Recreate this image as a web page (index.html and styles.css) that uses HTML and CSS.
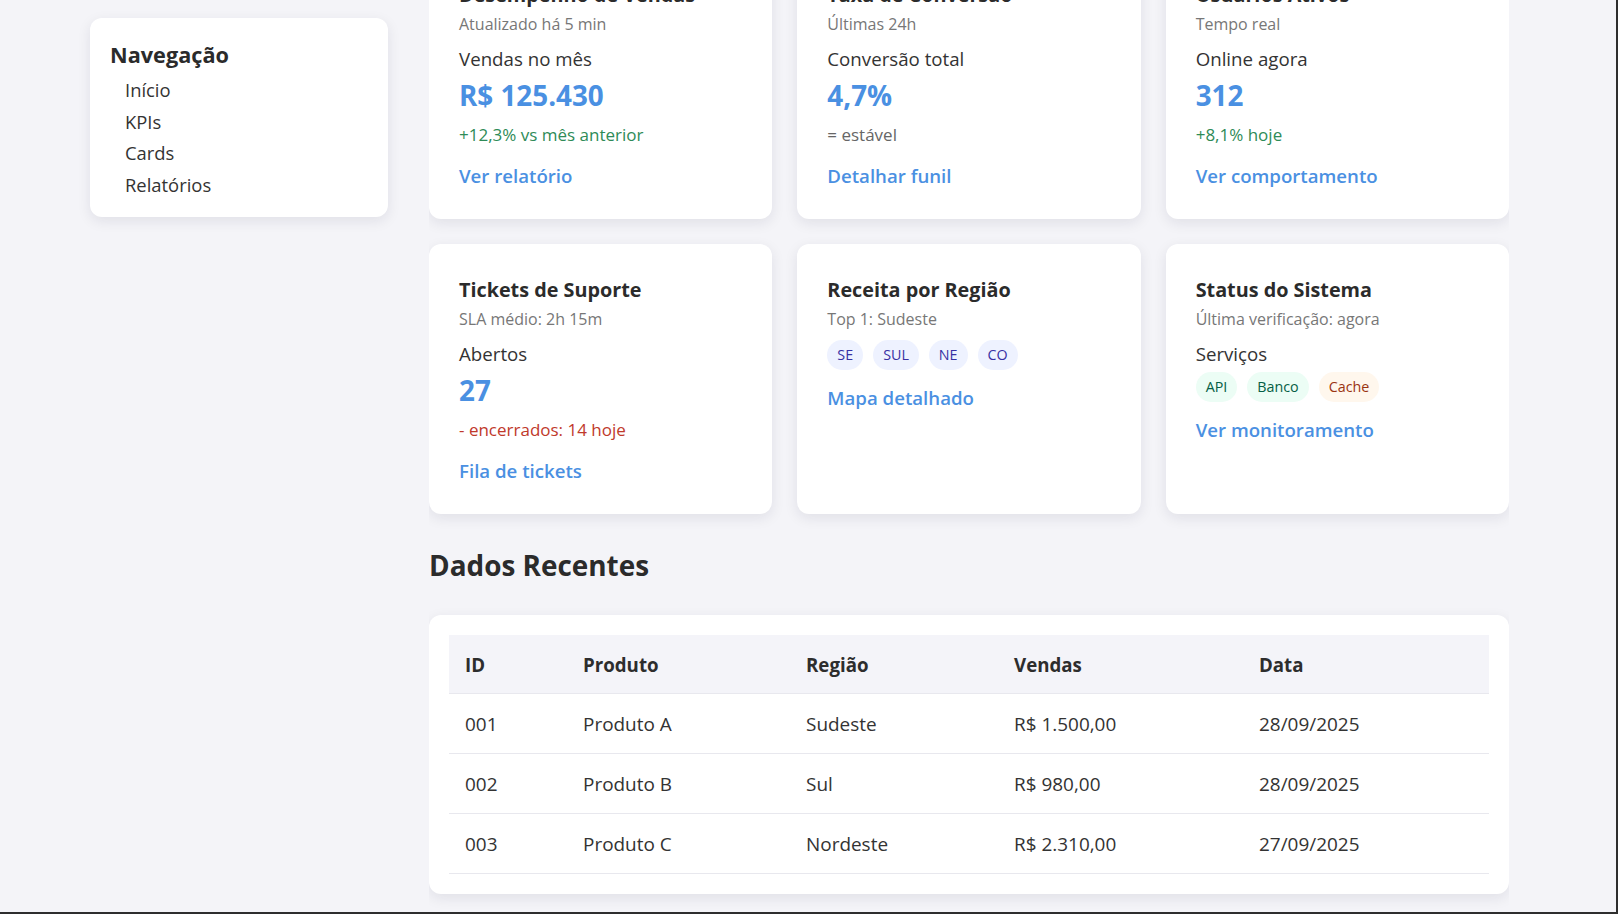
FILE: index.html
```html
<!DOCTYPE html>
<html lang="pt-BR">
<head>
<meta charset="utf-8">
<title>Dashboard</title>
<link rel="stylesheet" href="styles.css">
</head>
<body>
<div class="page">
  <aside class="sidebar">
    <nav class="nav-card">
      <h2 class="nav-title">Navegação</h2>
      <ul class="nav-list">
        <li>Início</li>
        <li>KPIs</li>
        <li>Cards</li>
        <li>Relatórios</li>
      </ul>
    </nav>
  </aside>

  <main class="main">
    <header class="page-header">
      <h1 class="page-title">Painel de Indicadores</h1>
    </header>

    <section class="kpis">
      <h2 class="section-title">Cards</h2>
      <div class="card-grid">
        <article class="card">
          <h3 class="card-title">Desempenho de Vendas</h3>
          <p class="card-sub">Atualizado há 5 min</p>
          <p class="card-label">Vendas no mês</p>
          <p class="card-value">R$ 125.430</p>
          <p class="card-delta up">+12,3% vs mês anterior</p>
          <a class="card-link" href="#">Ver relatório</a>
        </article>
        <article class="card">
          <h3 class="card-title">Taxa de Conversão</h3>
          <p class="card-sub">Últimas 24h</p>
          <p class="card-label">Conversão total</p>
          <p class="card-value">4,7%</p>
          <p class="card-delta flat">= estável</p>
          <a class="card-link" href="#">Detalhar funil</a>
        </article>
        <article class="card">
          <h3 class="card-title">Usuários Ativos</h3>
          <p class="card-sub">Tempo real</p>
          <p class="card-label">Online agora</p>
          <p class="card-value">312</p>
          <p class="card-delta up">+8,1% hoje</p>
          <a class="card-link" href="#">Ver comportamento</a>
        </article>
        <article class="card">
          <h3 class="card-title">Tickets de Suporte</h3>
          <p class="card-sub">SLA médio: 2h 15m</p>
          <p class="card-label">Abertos</p>
          <p class="card-value">27</p>
          <p class="card-delta down">- encerrados: 14 hoje</p>
          <a class="card-link" href="#">Fila de tickets</a>
        </article>
        <article class="card">
          <h3 class="card-title">Receita por Região</h3>
          <p class="card-sub">Top 1: Sudeste</p>
          <div class="chips">
            <span class="chip region">SE</span>
            <span class="chip region">SUL</span>
            <span class="chip region">NE</span>
            <span class="chip region">CO</span>
          </div>
          <a class="card-link" href="#">Mapa detalhado</a>
        </article>
        <article class="card">
          <h3 class="card-title">Status do Sistema</h3>
          <p class="card-sub">Última verificação: agora</p>
          <p class="card-label">Serviços</p>
          <div class="chips">
            <span class="chip ok">API</span>
            <span class="chip ok">Banco</span>
            <span class="chip warn">Cache</span>
          </div>
          <a class="card-link" href="#">Ver monitoramento</a>
        </article>
      </div>
    </section>

    <section class="recent">
      <h2 class="section-title recent-title">Dados Recentes</h2>
      <div class="table-card">
        <table class="data-table">
          <colgroup>
            <col class="c-id"><col class="c-prod"><col class="c-reg"><col class="c-sales"><col class="c-date">
          </colgroup>
          <thead>
            <tr><th>ID</th><th>Produto</th><th>Região</th><th>Vendas</th><th>Data</th></tr>
          </thead>
          <tbody>
            <tr><td>001</td><td>Produto A</td><td>Sudeste</td><td>R$ 1.500,00</td><td>28/09/2025</td></tr>
            <tr><td>002</td><td>Produto B</td><td>Sul</td><td>R$ 980,00</td><td>28/09/2025</td></tr>
            <tr><td>003</td><td>Produto C</td><td>Nordeste</td><td>R$ 2.310,00</td><td>27/09/2025</td></tr>
          </tbody>
        </table>
      </div>
    </section>
  </main>
</div>
<div class="frame"></div>
</body>
</html>
```
FILE: styles.css
```css
* { box-sizing: border-box; }

html, body {
  margin: 0;
  height: 100%;
}

body {
  background: #f4f4f8;
  color: #333;
  font-family: "Open Sans", "Noto Sans", sans-serif;
  overflow: hidden;
}

.page {
  display: grid;
  grid-template-columns: 298px 1080px;
  column-gap: 41px;
  padding-left: 90px;
  height: 100vh;
}

/* Sidebar */
.sidebar {
  align-self: start;
  padding-top: 18px;
}

.nav-card {
  background: #fff;
  border-radius: 12px;
  padding: 20px 20px 16px 20px;
  box-shadow: 0 4px 14px rgba(20, 20, 50, 0.09);
}

.nav-title {
  margin: 0;
  font-size: 21.7px;
  line-height: 33px;
  font-weight: 700;
  color: #2b2b2b;
}

.nav-list {
  list-style: none;
  margin: 3px 0 0;
  padding: 0 0 0 15px;
}

.nav-list li {
  font-size: 18.4px;
  line-height: 31.7px;
  color: #333;
}

/* Main column: scrolled to its end */
.main {
  height: 100vh;
  overflow: hidden;
  display: flex;
  flex-direction: column;
  justify-content: flex-end;
  padding-bottom: 20px;
}

.main > * { flex-shrink: 0; }

.page-title {
  margin: 0 0 20px;
  font-size: 32px;
  color: #2b2b2b;
}

.section-title {
  margin: 0 0 24px;
  font-size: 27.9px;
  line-height: 34px;
  font-weight: 700;
  color: #2b2b2b;
}

.recent-title {
  margin: 34px 0 33px;
}

/* Cards */
.card-grid {
  display: grid;
  grid-template-columns: repeat(3, 1fr);
  gap: 25px;
}

.card {
  background: #fff;
  border-radius: 12px;
  padding: 30px 30px 29px;
  box-shadow: 0 4px 14px rgba(20, 20, 50, 0.09);
}

.card p { margin: 0; }

.card-title {
  margin: 0;
  font-size: 19.8px;
  line-height: 31px;
  font-weight: 700;
  color: #2b2b2b;
}

.card .card-sub {
  margin: 2px 0 8.5px;
  font-size: 16px;
  line-height: 24px;
  color: #777;
}

.card .card-label {
  margin: 0 0 4.5px;
  font-size: 18.7px;
  line-height: 28px;
  color: #333;
}

.card .card-value {
  font-size: 27.8px;
  line-height: 36px;
  font-weight: 700;
  color: #4a90e2;
}

.card .card-delta {
  margin-top: 9px;
  font-size: 17px;
  line-height: 26px;
}

.up { color: #2e8b57; }
.flat { color: #666; }
.down { color: #c0392b; }

.card-link {
  display: block;
  margin-top: 14px;
  font-size: 18.65px;
  line-height: 28px;
  font-weight: 600;
  color: #4a90e2;
  text-decoration: none;
}

.chips {
  display: flex;
  gap: 10px;
}

.chip {
  display: inline-block;
  height: 30px;
  line-height: 30px;
  padding: 0 10px;
  border-radius: 15px;
  font-size: 14.3px;
}

.chip.region { background: #eef2ff; color: #3730a3; }
.chip.ok { background: #ecfdf5; color: #065f46; }
.chip.warn { background: #fff7ed; color: #9a3412; }

/* Table */
.table-card {
  background: #fff;
  border-radius: 12px;
  padding: 20px;
  box-shadow: 0 4px 14px rgba(20, 20, 50, 0.09);
}

.data-table {
  width: 100%;
  border-collapse: collapse;
  table-layout: fixed;
}

.c-id { width: 118px; }
.c-prod { width: 223px; }
.c-reg { width: 208px; }
.c-sales { width: 245px; }
.c-date { width: 246px; }

.data-table th,
.data-table td {
  text-align: left;
  padding: 17px 16px 15px;
  border-bottom: 1px solid #e8e8ee;
  color: #2d2d2d;
}

.data-table th {
  background: #f4f4f9;
  font-size: 18.7px;
  line-height: 26px;
  font-weight: 700;
}

.data-table td {
  font-size: 18.95px;
  line-height: 27px;
  color: #333;
}

/* Window frame edge seen in the capture */
.frame {
  position: fixed;
  inset: 0;
  border-right: 2px solid #2e2e2e;
  border-bottom: 2px solid #2e2e2e;
  pointer-events: none;
}
```
